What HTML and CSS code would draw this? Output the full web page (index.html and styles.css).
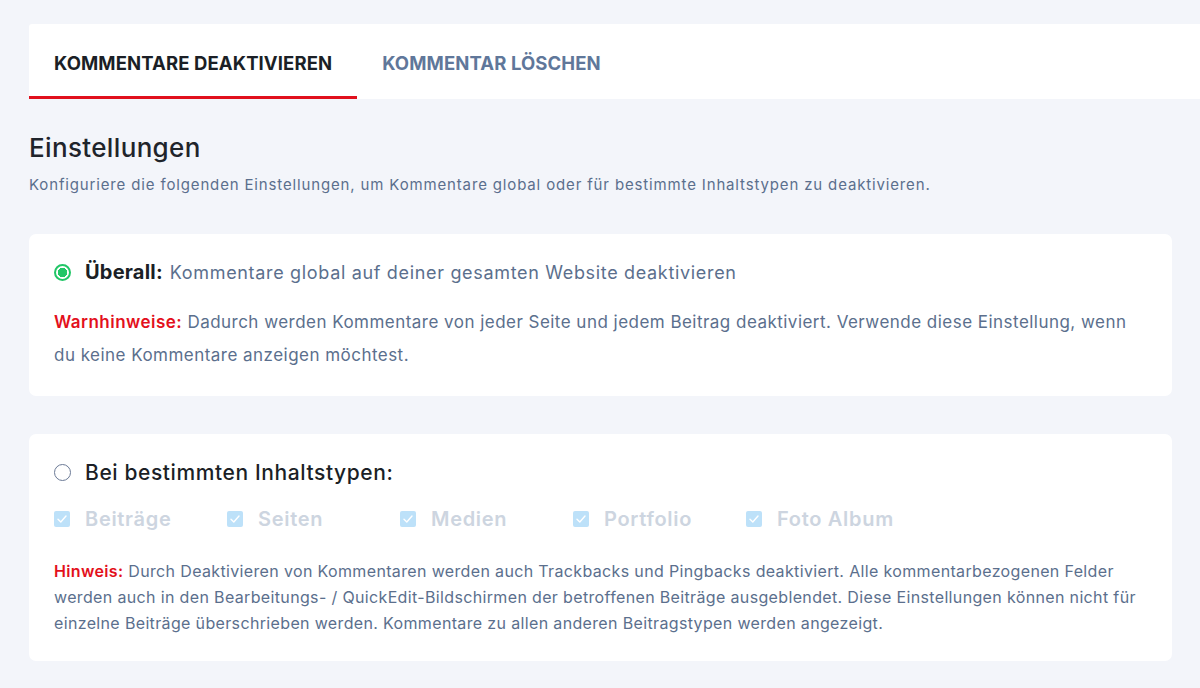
FILE: index.html
```html
<!DOCTYPE html>
<html lang="de">
<head>
<meta charset="utf-8">
<link rel="stylesheet" href="styles.css">
</head>
<body>
<div class="page">
  <nav class="tabs">
    <div class="tab active">KOMMENTARE DEAKTIVIEREN</div>
    <div class="tab">KOMMENTAR LÖSCHEN</div>
  </nav>
  <div class="content">
    <h1 class="title">Einstellungen</h1>
    <p class="desc">Konfiguriere die folgenden Einstellungen, um Kommentare global oder für bestimmte Inhaltstypen zu deaktivieren.</p>

    <section class="card card-one">
      <div class="option">
        <span class="radio checked"></span>
        <span class="opt-label">Überall:</span>
        <span class="opt-text">Kommentare global auf deiner gesamten Website deaktivieren</span>
      </div>
      <p class="warn"><span class="red">Warnhinweise:</span> Dadurch werden Kommentare von jeder Seite und jedem Beitrag deaktiviert. Verwende diese Einstellung, wenn du keine Kommentare anzeigen möchtest.</p>
    </section>

    <section class="card card-two">
      <div class="option">
        <span class="radio"></span>
        <span class="opt-label regular">Bei bestimmten Inhaltstypen:</span>
      </div>
      <div class="checks">
        <label class="check"><span class="box"><svg viewBox="0 0 16 16" width="16" height="16"><path d="M4 8.3 L6.8 11 L12 5" fill="none" stroke="#fff" stroke-width="1.4" stroke-linecap="round" stroke-linejoin="round"/></svg></span>Beiträge</label>
        <label class="check"><span class="box"><svg viewBox="0 0 16 16" width="16" height="16"><path d="M4 8.3 L6.8 11 L12 5" fill="none" stroke="#fff" stroke-width="1.4" stroke-linecap="round" stroke-linejoin="round"/></svg></span>Seiten</label>
        <label class="check"><span class="box"><svg viewBox="0 0 16 16" width="16" height="16"><path d="M4 8.3 L6.8 11 L12 5" fill="none" stroke="#fff" stroke-width="1.4" stroke-linecap="round" stroke-linejoin="round"/></svg></span>Medien</label>
        <label class="check"><span class="box"><svg viewBox="0 0 16 16" width="16" height="16"><path d="M4 8.3 L6.8 11 L12 5" fill="none" stroke="#fff" stroke-width="1.4" stroke-linecap="round" stroke-linejoin="round"/></svg></span>Portfolio</label>
        <label class="check"><span class="box"><svg viewBox="0 0 16 16" width="16" height="16"><path d="M4 8.3 L6.8 11 L12 5" fill="none" stroke="#fff" stroke-width="1.4" stroke-linecap="round" stroke-linejoin="round"/></svg></span>Foto Album</label>
      </div>
      <p class="note"><span class="red">Hinweis:</span> Durch Deaktivieren von Kommentaren werden auch Trackbacks und Pingbacks deaktiviert. Alle kommentarbezogenen Felder werden auch in den Bearbeitungs- / QuickEdit-Bildschirmen der betroffenen Beiträge ausgeblendet. Diese Einstellungen können nicht für einzelne Beiträge überschrieben werden. Kommentare zu allen anderen Beitragstypen werden angezeigt.</p>
    </section>
  </div>
</div>
</body>
</html>
```
FILE: styles.css
```css
* { box-sizing: border-box; }
html, body { margin: 0; padding: 0; }
body {
  background: #f3f5fa;
  font-family: Inter, "Noto Sans", sans-serif;
  color: #5b6f8d;
  width: 1200px;
  height: 688px;
  overflow: hidden;
}
.page {
  padding: 24px 0 0 29px;
}
.tabs {
  display: flex;
  height: 75px;
  background: #fff;
  border-top-left-radius: 3px;
}
.tab {
  display: flex;
  align-items: center;
  padding: 2px 25px 0;
  font-size: 18.5px;
  font-weight: 700;
  color: #60779a;
  letter-spacing: 0.1px;
}
.tab.active {
  color: #1b1f26;
  border-bottom: 3px solid #e1101d;
  padding-top: 5px;
}
.content {
  padding-right: 28px;
}
.title {
  margin: 34px 0 0;
  font-size: 26px;
  font-weight: 500;
  color: #1f242b;
  line-height: 30px;
  letter-spacing: 0.35px;
}
.desc {
  margin: 12px 0 0;
  font-size: 15px;
  line-height: 20px;
  letter-spacing: 0.85px;
}
.card {
  background: #fff;
  border-radius: 7px;
  padding: 0 25px;
}
.card-one {
  margin-top: 39px;
  height: 162px;
  padding-top: 26px;
}
.card-two {
  margin-top: 38px;
  height: 227px;
  padding-top: 26px;
}
.option {
  display: flex;
  align-items: center;
  height: 24px;
}
.radio {
  width: 17px;
  height: 17px;
  border-radius: 50%;
  border: 1.5px solid #6b7a96;
  margin-right: 14px;
  flex: none;
}
.radio.checked {
  border: 2px solid #22c667;
  background: radial-gradient(circle, #22c667 0 4.5px, #fff 5px);
}
.opt-label {
  font-size: 20px;
  font-weight: 700;
  color: #1b1f26;
  margin-right: 7px;
  letter-spacing: 0.2px;
}
.opt-label.regular {
  font-size: 21px;
  font-weight: 500;
  letter-spacing: 0.6px;
}
.opt-text {
  font-size: 18px;
  color: #5b6f8d;
  letter-spacing: 0.67px;
}
.warn {
  margin: 22px 0 0;
  font-size: 17px;
  line-height: 33px;
  letter-spacing: 0.47px;
}
.red {
  color: #e3101c;
  font-weight: 600;
}
.checks {
  display: flex;
  margin-top: 22px;
  height: 26px;
  align-items: center;
}
.check {
  width: 173px;
  display: flex;
  align-items: center;
  font-size: 20px;
  font-weight: 600;
  color: #cdd5e0;
  letter-spacing: 0.7px;
}
.box {
  width: 16px;
  height: 16px;
  background: #bde1f9;
  border-radius: 2px;
  margin-right: 15px;
  display: flex;
}
.note {
  margin: 26px 0 0;
  font-size: 16px;
  line-height: 26px;
  letter-spacing: 0.35px;
}
```
